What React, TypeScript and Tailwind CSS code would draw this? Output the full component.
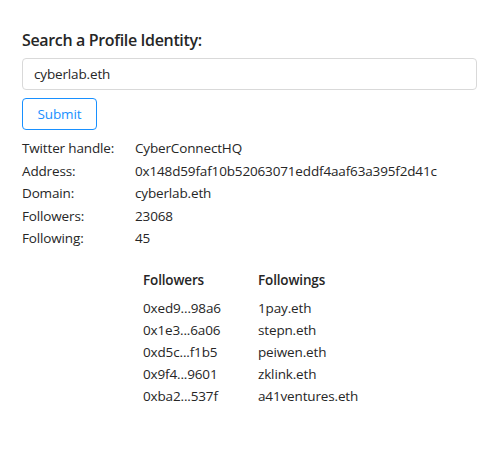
const info: [string, string][] = [
  ["Twitter handle:", "CyberConnectHQ"],
  ["Address:", "0x148d59faf10b52063071eddf4aaf63a395f2d41c"],
  ["Domain:", "cyberlab.eth"],
  ["Followers:", "23068"],
  ["Following:", "45"],
];

const rows: [string, string][] = [
  ["0xed9...98a6", "1pay.eth"],
  ["0x1e3...6a06", "stepn.eth"],
  ["0xd5c...f1b5", "peiwen.eth"],
  ["0x9f4...9601", "zklink.eth"],
  ["0xba2...537f", "a41ventures.eth"],
];

export default function App() {
  return (
    <div
      className="w-[492px] h-[449px] bg-white px-[22px] pt-[28px] text-[13.5px] tracking-[-0.15px] text-[#262626]"
      style={{ fontFamily: '"Segoe UI", "Open Sans", sans-serif' }}
    >
      <h2 className="text-[16px] tracking-[-0.35px] font-semibold leading-[24px] text-[#262626]">Search a Profile Identity:</h2>
      <input
        defaultValue="cyberlab.eth"
        className="mt-[6px] block w-[455px] h-[32px] rounded-[4px] border border-[#d9d9d9] px-[11px] text-[13.5px] text-[#262626] outline-none"
      />
      <button className="mt-[8px] h-[32px] w-[75px] rounded-[4px] border border-[#1890ff] text-[13.5px] text-[#1890ff]">
        Submit
      </button>
      <div className="mt-[7px] flex flex-col">
        {info.map(([k, v]) => (
          <div key={k} className="flex leading-[22.5px]">
            <span className="w-[113px] shrink-0">{k}</span>
            <span>{v}</span>
          </div>
        ))}
      </div>
      <table className="ml-[121px] mt-[19px]">
        <thead>
          <tr className="text-left">
            <th className="w-[115px] pb-[6px] font-semibold leading-[22px]">Followers</th>
            <th className="font-semibold pb-[6px] leading-[22px]">Followings</th>
          </tr>
        </thead>
        <tbody>
          {rows.map(([a, b]) => (
            <tr key={a}>
              <td className="leading-[22px]">{a}</td>
              <td className="leading-[22px]">{b}</td>
            </tr>
          ))}
        </tbody>
      </table>
    </div>
  );
}
